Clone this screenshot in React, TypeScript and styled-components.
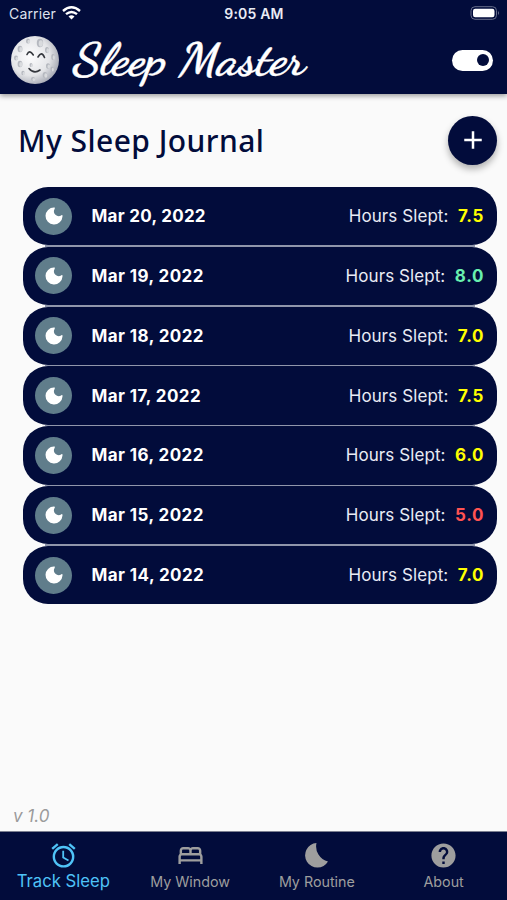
import React from "react";
import styled, { createGlobalStyle } from "styled-components";
import { MdAlarm, MdOutlineBed, MdHelp, MdAdd } from "react-icons/md";

const navy = "#020c3b";

const Global = createGlobalStyle`
  * { box-sizing: border-box; }
  body { margin: 0; background: #fafafa; font-family: Inter, "Liberation Sans", sans-serif; }
`;
const Screen = styled.div`
  width: 507px; height: 900px; overflow: hidden;
  display: flex; flex-direction: column; background: #fafafa;
`;
const Header = styled.header`
  height: 94px; flex: none; background: ${navy}; color: #fff;
  box-shadow: 0 2px 5px rgba(0, 0, 0, 0.38);
`;
const StatusBar = styled.div`
  height: 28px; padding: 0 7px 2px 9px; display: grid; align-items: center;
  grid-template-columns: 1fr auto 1fr; font-size: 14px; color: #dfe2ee;
`;
const Carrier = styled.div`display: flex; align-items: center; gap: 6px; letter-spacing: 0.15px;`;
const Clock = styled.div`font-weight: 600; letter-spacing: 0.2px; margin-right: 1px; color: #e9ebf4;`;
const BatteryIcon = styled.svg`justify-self: end; display: block;`;
const Brand = styled.div`
  height: 64px; display: flex; align-items: center; padding: 0 14px 0 10px;
`;
const Title = styled.h1`
  margin: 0 auto 0 13px; font: 700 45px/60px "Dancing Script", cursive;
  white-space: nowrap; color: #fff; -webkit-text-stroke: 0.4px #fff;
  transform: scaleX(1.09) skewX(-6deg); transform-origin: 0 60%;
`;
const Toggle = styled.div`
  width: 41px; height: 21px; border-radius: 11px; background: #fff; padding: 4.5px;
  display: flex; justify-content: flex-end;
`;
const Knob = styled.div`width: 12px; height: 12px; border-radius: 50%; background: ${navy};`;
const Main = styled.main`flex: 1; display: flex; flex-direction: column; padding: 22px 10px 0 0;`;
const Heading = styled.div`
  height: 49px; display: flex; justify-content: space-between; align-items: center; padding-left: 18px;
`;
const H2 = styled.h2`
  margin: 1px 0 0; font: 500 30px/40px "Noto Sans", sans-serif; letter-spacing: 0.45px; color: ${navy};
`;
const AddButton = styled.button`
  width: 49px; height: 49px; border: 0; padding: 0; border-radius: 50%; background: ${navy}; color: #fff;
  display: grid; place-items: center; box-shadow: 0 4px 7px rgba(0, 0, 0, 0.3);
  svg { display: block; margin-top: -1px; }
`;
const List = styled.div`margin: 22px 0 0 23px; display: flex; flex-direction: column;`;
const Row = styled.div`
  height: 58.2px; border-radius: 25px; background: ${navy}; color: #fff;
  display: flex; align-items: center; padding: 0 13px 0 12px; font-size: 17px;
`;
const Divider = styled.div`height: 1.65px; margin: 0 22px; background: #9096ab;`;
const Avatar = styled.div`
  width: 37px; height: 37px; border-radius: 50%; background: #607d8b; display: grid; place-items: center;
`;
const DateText = styled.div<{ $spacing: number }>`
  margin: 0 auto 0 19.5px; font-weight: 700; letter-spacing: ${(p) => p.$spacing}px;
`;
const Hours = styled.div`color: #e9ebf4; letter-spacing: 0.08px;`;
const Value = styled.span<{ $c: string }>`
  font-weight: 700; margin-left: 9.5px; letter-spacing: 0.6px; color: ${(p) => p.$c};
`;
const Version = styled.div`
  margin: auto 0 5px 13px; font: italic 400 17px/20px Inter, sans-serif; color: #9b9b9b;
`;
const Nav = styled.nav`
  height: 69px; flex: none; background: ${navy}; border-top: 1px solid #7c8091;
  display: grid; grid-template-columns: repeat(4, 1fr);
`;
const Tab = styled.div<{ $active?: boolean }>`
  display: flex; flex-direction: column; align-items: center; padding-top: 9px;
  color: ${(p) => (p.$active ? "#4fc3f7" : "#9e9e9e")};
  font-size: ${(p) => (p.$active ? 16.7 : 14.3)}px; line-height: ${(p) => (p.$active ? 22 : 24)}px;
  white-space: nowrap;
  svg { display: block; }
`;

const entries = [
  ["Mar 20, 2022", "7.5"], ["Mar 19, 2022", "8.0"], ["Mar 18, 2022", "7.0"], ["Mar 17, 2022", "7.5"],
  ["Mar 16, 2022", "6.0"], ["Mar 15, 2022", "5.0"], ["Mar 14, 2022", "7.0"],
];
const valueColor = (v: string) => (Number(v) >= 8 ? "#69f0ae" : Number(v) >= 6 ? "#ffff00" : "#ff5252");
const dateSpacing = (date: string) => (date.includes(" 1") ? 0.42 : 0.27);

const craters: [number, number, number, number][] = [
  [30, 8, 3.2, 4.2], [18, 6, 2, 2.5], [10, 14, 2.4, 3.2], [6, 23, 2, 2.4], [10, 29, 2.4, 3.3], [37, 15, 2, 3],
  [43, 22, 1.7, 3], [38, 31, 2, 2.8], [35, 40, 2.3, 3], [23, 44, 2, 2], [13, 38, 1.7, 2.2], [21, 30, 1.5, 2], [42, 34, 1.5, 2.5],
];

function MoonLogo() {
  return (
    <svg width="50" height="50" viewBox="0 0 50 50">
      <defs>
        <radialGradient id="moon" cx=".4" cy=".42" r=".62">
          <stop offset="0" stopColor="#fdfdfe" /><stop offset=".65" stopColor="#e4e5e8" /><stop offset="1" stopColor="#a9acb6" />
        </radialGradient>
      </defs>
      <circle cx="25" cy="25" r="24" fill="url(#moon)" />
      {craters.map(([x, y, rx, ry], i) => (
        <g key={i}>
          <ellipse cx={x} cy={y} rx={rx} ry={ry} fill="#b5b8bf" />
          <ellipse cx={x + 0.8} cy={y + 0.5} rx={rx * 0.65} ry={ry * 0.75} fill="#d9dbde" />
        </g>
      ))}
      <path d="M17 19.500Q19.500 14 23.300 20M28 22Q31.500 15.500 34.500 22.500M19 33.500Q24 39.500 30 35" fill="none" stroke="#34373d" strokeWidth="1.6" strokeLinecap="round" />
    </svg>
  );
}

export default function App() {
  return (
    <Screen>
      <Global />
      <Header>
        <StatusBar>
          <Carrier>
            Carrier
            <svg width="19" height="14" viewBox="0 0 19 14">
              <g fill="none" stroke="#fff" strokeWidth="2.4">
                <path d="M1 5Q9.500-2.300 18 5" /><path d="M4 8.200Q9.500 3.600 15 8.200" />
              </g>
              <path d="M6.500 10.500Q9.500 8 12.500 10.500L9.500 13.500Z" fill="#fff" />
            </svg>
          </Carrier>
          <Clock>9:05 AM</Clock>
          <BatteryIcon width="30" height="14" viewBox="0 0 30 14">
            <rect x="1" y=".7" width="25.500" height="12.600" rx="4" fill="none" stroke="#686e8b" />
            <rect x="3" y="2.700" width="21.500" height="8.600" rx="2.200" fill="#fff" />
            <path d="M28 5v4q2-2 0-4" fill="#686e8b" />
          </BatteryIcon>
        </StatusBar>
        <Brand>
          <MoonLogo />
          <Title>Sleep Master</Title>
          <Toggle><Knob /></Toggle>
        </Brand>
      </Header>
      <Main>
        <Heading>
          <H2>My Sleep Journal</H2>
          <AddButton aria-label="Add"><MdAdd size={30} /></AddButton>
        </Heading>
        <List>
          {entries.map(([date, v], i) => (
            <React.Fragment key={date}>
              {i > 0 && <Divider />}
              <Row>
                <Avatar>
                  <svg width="18" height="18" viewBox="0 0 18 18">
                    <path d="M9 .5A8.500 8.500 0 1 0 17.500 9.500C17.600 8.100 17.100 7.800 16.200 8.400A4.800 4.800 0 0 1 9.600 1.900C10.100 1 10 .5 9 .5Z" fill="#fff" />
                  </svg>
                </Avatar>
                <DateText $spacing={dateSpacing(date)}>{date}</DateText>
                <Hours>Hours Slept:<Value $c={valueColor(v)}>{v}</Value></Hours>
              </Row>
            </React.Fragment>
          ))}
        </List>
        <Version>v 1.0</Version>
      </Main>
      <Nav>
        <Tab $active><MdAlarm size={29} />Track Sleep</Tab>
        <Tab><MdOutlineBed size={29} />My Window</Tab>
        <Tab>
          <svg width="29" height="29" viewBox="0 0 29 29">
            <path d="M14.500 2A12.300 12.300 0 1 0 26 20.500A15.500 15.500 0 0 1 14.500 2Z" fill="currentColor" />
          </svg>
          My Routine
        </Tab>
        <Tab><MdHelp size={29} />About</Tab>
      </Nav>
    </Screen>
  );
}
